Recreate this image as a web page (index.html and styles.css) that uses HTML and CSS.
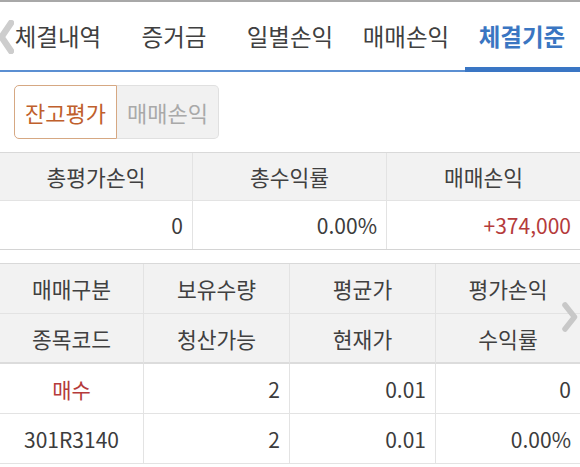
FILE: index.html
```html
<!DOCTYPE html>
<html lang="ko">
<head>
<meta charset="utf-8">
<link rel="stylesheet" href="styles.css">
</head>
<body>
<div class="page">
  <nav class="tabs">
    <div class="tab">체결내역</div>
    <div class="tab">증거금</div>
    <div class="tab">일별손익</div>
    <div class="tab">매매손익</div>
    <div class="tab active">체결기준</div>
    <svg class="chev chev-left" width="16" height="34" viewBox="0 0 16 34"><polyline points="13,3 3.5,17 13,31" fill="none" stroke="#cdcdcd" stroke-width="6.5" stroke-linecap="round" stroke-linejoin="round"/></svg>
  </nav>

  <div class="seg">
    <div class="seg-btn on">잔고평가</div>
    <div class="seg-btn off">매매손익</div>
  </div>

  <div class="sum">
    <div class="cell head">총평가손익</div>
    <div class="cell head">총수익률</div>
    <div class="cell head last">매매손익</div>
    <div class="cell num">0</div>
    <div class="cell num">0.00%</div>
    <div class="cell num red last">+374,000</div>
  </div>

  <div class="list">
    <div class="cell head">매매구분</div>
    <div class="cell head">보유수량</div>
    <div class="cell head">평균가</div>
    <div class="cell head last">평가손익</div>
    <div class="cell head hb">종목코드</div>
    <div class="cell head hb">청산가능</div>
    <div class="cell head hb">현재가</div>
    <div class="cell head hb last">수익률</div>
    <div class="cell mid red">매수</div>
    <div class="cell num">2</div>
    <div class="cell num">0.01</div>
    <div class="cell num last">0</div>
    <div class="cell mid">301R3140</div>
    <div class="cell num">2</div>
    <div class="cell num">0.01</div>
    <div class="cell num last">0.00%</div>
    <svg class="chev chev-right" width="16" height="30" viewBox="0 0 16 30"><polyline points="3,3 12.5,15 3,27" fill="none" stroke="#c8c8c8" stroke-width="5.5" stroke-linecap="round" stroke-linejoin="round"/></svg>
  </div>
</div>
</body>
</html>
```

FILE: styles.css
```css
html, body {
  margin: 0;
  padding: 0;
  background: #ffffff;
}

.page {
  width: 580px;
  height: 467px;
  overflow: hidden;
  border-top: 2px solid #a8a8a8;
  box-sizing: border-box;
  font-family: "Noto Sans CJK KR", "Noto Sans", sans-serif;
  color: #3c3c3c;
}

.tabs {
  position: relative;
  display: flex;
  height: 68px;
  border-bottom: 2px solid #5b8fd2;
}

.tab {
  flex: 1;
  display: flex;
  align-items: center;
  justify-content: center;
  padding-bottom: 1px;
  font-size: 23.5px;
  color: #404040;
}

.tab.active {
  position: relative;
  color: #3a76c2;
  font-weight: 700;
}

.tab.active::after {
  content: "";
  position: absolute;
  left: 1px;
  right: 0;
  bottom: -2px;
  height: 5px;
  background: #3a76c4;
}

.chev {
  position: absolute;
}

.chev-left {
  left: -2px;
  top: 18px;
}

.seg {
  display: flex;
  margin: 13px 0 0 14px;
}

.seg-btn {
  box-sizing: border-box;
  height: 54px;
  display: flex;
  align-items: center;
  justify-content: center;
  font-size: 22px;
}

.seg-btn.on {
  width: 103px;
  border: 1px solid #d6a883;
  border-radius: 5px 0 0 5px;
  background: #ffffff;
  color: #c0602c;
}

.seg-btn.off {
  width: 102px;
  border: 1px solid #e0e0e0;
  border-left: none;
  border-radius: 0 5px 5px 0;
  background: #f1f1f1;
  color: #a9a9a9;
}

.sum {
  display: grid;
  grid-template-columns: 193px 194px 193px;
  margin-top: 13px;
  border-top: 1px solid #d9d9d9;
  border-bottom: 1px solid #d4d4d4;
}

.list {
  position: relative;
  display: grid;
  grid-template-columns: 144px 146px 146px 144px;
  margin-top: 13px;
  border-top: 1px solid #d9d9d9;
}

.cell {
  box-sizing: border-box;
  display: flex;
  align-items: center;
  font-size: 21px;
  border-right: 1px solid #e3e3e3;
  border-bottom: 1px solid #e3e3e3;
}

.sum .cell {
  height: 48px;
}

.list .cell {
  height: 50px;
}

.sum .cell.num {
  border-bottom: none;
}

.cell.last {
  border-right: none;
}

.cell.head {
  justify-content: center;
  background: #f2f2f2;
  color: #404040;
  font-size: 21.5px;
}

.cell.hb {
  border-bottom: 2px solid #dcdcdc;
}

.cell.num {
  justify-content: flex-end;
  padding-right: 9px;
}

.cell.mid {
  justify-content: center;
}

.red {
  color: #b53b3b;
}

.chev-right {
  right: 2px;
  top: 38px;
}
```
